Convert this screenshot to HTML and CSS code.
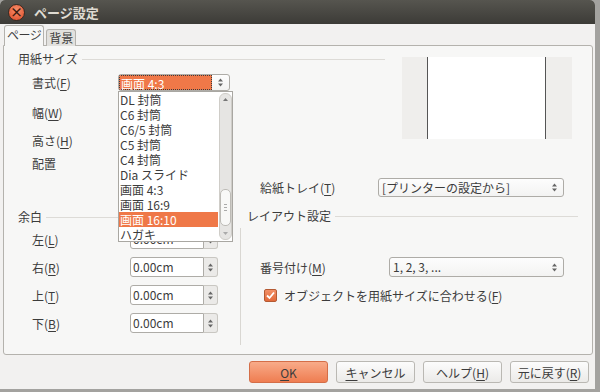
FILE: index.html
```html
<!DOCTYPE html>
<html lang="ja">
<head>
  <meta charset="UTF-8" />
  <title>ページ設定</title>
  <link rel="stylesheet" href="styles.css">
</head>
<body>
  <div class="window">
    <header class="titlebar">
      <span class="close-btn">×</span>
      <h1>ページ設定</h1>
    </header>

    <nav class="tabs">
      <span class="tab active">ページ</span>
      <span class="tab">背景</span>
    </nav>

    <div class="panel">
      <div class="upper">
        <div class="paper">
          <div class="group-head">用紙サイズ</div>
          <div class="row row-format">
            <label>書式(<u>F</u>)</label>
            <div class="combo combo-format">
              <span class="combo-text focused">画面 4:3</span>
              <span class="combo-btn">
                <svg width="7" height="11" viewBox="0 0 7 11"><path d="M1 4.5 L3.5 1.5 L6 4.5Z M1 6.5 L3.5 9.5 L6 6.5Z" fill="#666"/></svg>
              </span>
            </div>
          </div>
          <div class="row row-width"><label>幅(<u>W</u>)</label></div>
          <div class="row row-height"><label>高さ(<u>H</u>)</label></div>
          <div class="row row-align"><label>配置</label></div>
        </div>
        <div class="preview"><div class="page"></div></div>
      </div>

      <div class="tray-row">
        <label>給紙トレイ(<u>T</u>)</label>
        <div class="combo combo-tray">
          <span class="combo-text">[プリンターの設定から]</span>
          <span class="combo-btn">
            <svg width="7" height="11" viewBox="0 0 7 11"><path d="M1 4.5 L3.5 1.5 L6 4.5Z M1 6.5 L3.5 9.5 L6 6.5Z" fill="#666"/></svg>
          </span>
        </div>
      </div>

      <div class="lower">
        <div class="margins">
          <div class="group-head">余白</div>
          <div class="row margin-row">
            <label>左(<u>L</u>)</label>
            <div class="spinbox"><span class="field">0.00cm</span><span class="spin-btn"><svg width="7" height="11" viewBox="0 0 7 11"><path d="M1 4.5 L3.5 1.5 L6 4.5Z M1 6.5 L3.5 9.5 L6 6.5Z" fill="#666"/></svg></span></div>
          </div>
          <div class="row margin-row">
            <label>右(<u>R</u>)</label>
            <div class="spinbox"><span class="field">0.00cm</span><span class="spin-btn"><svg width="7" height="11" viewBox="0 0 7 11"><path d="M1 4.5 L3.5 1.5 L6 4.5Z M1 6.5 L3.5 9.5 L6 6.5Z" fill="#666"/></svg></span></div>
          </div>
          <div class="row margin-row">
            <label>上(<u>T</u>)</label>
            <div class="spinbox"><span class="field">0.00cm</span><span class="spin-btn"><svg width="7" height="11" viewBox="0 0 7 11"><path d="M1 4.5 L3.5 1.5 L6 4.5Z M1 6.5 L3.5 9.5 L6 6.5Z" fill="#666"/></svg></span></div>
          </div>
          <div class="row margin-row">
            <label>下(<u>B</u>)</label>
            <div class="spinbox"><span class="field">0.00cm</span><span class="spin-btn"><svg width="7" height="11" viewBox="0 0 7 11"><path d="M1 4.5 L3.5 1.5 L6 4.5Z M1 6.5 L3.5 9.5 L6 6.5Z" fill="#666"/></svg></span></div>
          </div>
        </div>

        <div class="vsep"></div>

        <div class="layout">
          <div class="group-head">レイアウト設定</div>
          <div class="row row-numbering">
            <label>番号付け(<u>M</u>)</label>
            <div class="combo combo-numbering">
              <span class="combo-text">1, 2, 3, ...</span>
              <span class="combo-btn">
                <svg width="7" height="11" viewBox="0 0 7 11"><path d="M1 4.5 L3.5 1.5 L6 4.5Z M1 6.5 L3.5 9.5 L6 6.5Z" fill="#666"/></svg>
              </span>
            </div>
          </div>
          <div class="check-row">
            <span class="checkbox">
              <svg width="13" height="13" viewBox="0 0 13 13"><path d="M3 6.5 L5.5 9 L10 3.5" fill="none" stroke="#fff" stroke-width="1.8"/></svg>
            </span>
            <span>オブジェクトを用紙サイズに合わせる(<u>F</u>)</span>
          </div>
        </div>
      </div>
    </div>

    <div class="buttons">
      <button class="btn btn-ok"><u>O</u>K</button>
      <button class="btn"><u>キ</u>ャンセル</button>
      <button class="btn">ヘルプ(<u>H</u>)</button>
      <button class="btn">元に戻す(<u>R</u>)</button>
    </div>

    <div class="dropdown">
      <ul class="dropdown-list">
        <li>DL 封筒</li>
        <li>C6 封筒</li>
        <li>C6/5 封筒</li>
        <li>C5 封筒</li>
        <li>C4 封筒</li>
        <li>Dia スライド</li>
        <li>画面 4:3</li>
        <li>画面 16:9</li>
        <li class="selected">画面 16:10</li>
        <li>ハガキ</li>
      </ul>
      <div class="scrollbar">
        <svg class="sb-up" width="7" height="5" viewBox="0 0 7 5"><path d="M1 4 L3.5 1 L6 4Z" fill="#777"/></svg>
        <div class="sb-thumb"><span></span><span></span><span></span></div>
        <svg class="sb-down" width="7" height="5" viewBox="0 0 7 5"><path d="M1 1 L3.5 4 L6 1Z" fill="#aaa"/></svg>
      </div>
    </div>
  </div>
</body>
</html>
```

FILE: styles.css
```css
* {
  box-sizing: border-box;
}

body {
  margin: 0;
  background: #a3a29f;
  font-family: "Noto Sans CJK JP", "DejaVu Sans", sans-serif;
  font-size: 12px;
  color: #3c3c3c;
}

u {
  text-underline-offset: 2px;
}

.window {
  position: relative;
  width: 595px;
  height: 389px;
  background: #f2f1f0;
  border-radius: 5px 5px 0 0;
  overflow: hidden;
  display: flex;
  flex-direction: column;
}

/* title bar */
.titlebar {
  height: 24px;
  flex: none;
  background: linear-gradient(#56554f, #3c3b37);
  display: flex;
  align-items: center;
  padding-left: 8px;
  gap: 9px;
}

.close-btn {
  width: 17px;
  height: 17px;
  border-radius: 50%;
  background: radial-gradient(circle at 50% 35%, #f7906c, #dc4a27);
  border: 1px solid #3a2a22;
  color: #3b1b10;
  font-size: 13px;
  line-height: 14px;
  text-align: center;
  font-weight: bold;
}

.titlebar h1 {
  margin: 0;
  font-size: 13px;
  font-weight: bold;
  color: #dfdbd2;
}

/* tabs */
.tabs {
  height: 22px;
  flex: none;
  display: flex;
  align-items: flex-end;
  padding-left: 4px;
  gap: 2px;
  position: relative;
  z-index: 2;
  margin-bottom: -1px;
}

.tab {
  height: 17px;
  padding: 0 2px;
  border: 1px solid #b4b2ad;
  border-bottom: none;
  border-radius: 3px 3px 0 0;
  background: #e2e1de;
  line-height: 16px;
  font-size: 12px;
  white-space: nowrap;
}

.tab.active {
  height: 21px;
  background: #f7f7f6;
  line-height: 18px;
  letter-spacing: -0.5px;
}

/* main panel */
.panel {
  height: 310px;
  flex: none;
  margin: 0 2px 0 3px;
  border: 1px solid #b4b2ad;
  border-radius: 0 3px 3px 3px;
  background: #f7f7f6;
  padding: 0 14px;
  display: flex;
  flex-direction: column;
}

.group-head {
  display: flex;
  align-items: center;
  gap: 4px;
  height: 14px;
  line-height: 14px;
}

.group-head::after {
  content: "";
  flex: 1;
  height: 1px;
  background: #dddbd7;
}

.row {
  display: flex;
  align-items: center;
  height: 18px;
  padding-left: 14px;
}

.row label {
  flex: none;
}

.upper {
  display: flex;
}

.paper {
  width: 367px;
  display: flex;
  flex-direction: column;
  padding-top: 6px;
}

.row-format {
  margin-top: 7px;
}

.row-format label {
  width: 86px;
}

.row-width {
  margin-top: 12px;
}

.row-height {
  margin-top: 10px;
}

.row-align {
  margin-top: 5px;
}

.preview {
  width: 170px;
  height: 82px;
  margin: 11px 0 0 17px;
  background: #efeeec;
  display: flex;
  justify-content: center;
}

.page {
  width: 119px;
  height: 100%;
  margin-left: -2px;
  background: #fff;
  border-left: 1px solid #555;
  border-right: 1px solid #555;
}

/* combos */
.combo {
  display: flex;
  border: 1px solid #aeaca7;
  border-radius: 3px;
  background: linear-gradient(#fdfdfd, #f3f3f2);
  overflow: hidden;
}

.combo-text {
  flex: 1;
  padding-left: 3px;
  white-space: nowrap;
}

.combo-btn {
  width: 17px;
  display: flex;
  align-items: center;
  justify-content: center;
}

.combo-format {
  width: 112px;
  height: 17px;
  line-height: 15px;
}

.combo-format .combo-text.focused {
  background: #ef7848;
  color: #fff;
  border: 1px dotted #3c3c3c;
  padding-left: 1px;
}

.tray-row {
  display: flex;
  align-items: center;
  height: 19px;
  margin-top: 6px;
  padding-left: 242px;
}

.tray-row label {
  width: 118px;
}

.combo-tray {
  width: 186px;
  height: 19px;
  line-height: 17px;
}

/* lower area */
.lower {
  flex: 1;
  display: flex;
  margin-top: 12px;
}

.margins {
  width: 222px;
  padding-right: 10px;
  display: flex;
  flex-direction: column;
}

.margins .group-head {
  margin-top: 1px;
}

.margin-row {
  height: 20px;
  margin-top: 8px;
}

.margins .group-head + .margin-row {
  margin-top: 5px;
}

.margin-row label {
  width: 98px;
}

.spinbox {
  display: flex;
  height: 20px;
}

.spinbox .field {
  width: 74px;
  border: 1px solid #aeaca7;
  border-radius: 3px 0 0 3px;
  background: #fff;
  line-height: 18px;
  padding-left: 2px;
}

.spin-btn {
  width: 14px;
  border: 1px solid #c9c7c2;
  border-left: none;
  border-radius: 0 3px 3px 0;
  background: #ebeae8;
  display: flex;
  align-items: center;
  justify-content: center;
}

.vsep {
  width: 1px;
  background: #d9d7d2;
  margin: 19px 0 9px;
}

.layout {
  flex: 1;
  padding-left: 6px;
  display: flex;
  flex-direction: column;
}

.row-numbering {
  margin-top: 34px;
  height: 20px;
  padding-left: 13px;
}

.row-numbering label {
  width: 129px;
}

.combo-numbering {
  width: 175px;
  height: 20px;
  line-height: 18px;
}

.check-row {
  display: flex;
  align-items: center;
  gap: 7px;
  margin-top: 11px;
  padding-left: 17px;
  height: 14px;
}

.checkbox {
  width: 13px;
  height: 13px;
  border: 1px solid #b45a33;
  border-radius: 2px;
  background: linear-gradient(#f29067, #e26a3a);
  display: flex;
}

.checkbox svg {
  margin: -1px;
}

/* dialog buttons */
.buttons {
  display: flex;
  justify-content: flex-end;
  gap: 8px;
  padding: 6px 6px 0 0;
}

.btn {
  width: 79px;
  height: 22px;
  border: 1px solid #bab8b3;
  border-radius: 3px;
  background: linear-gradient(#fcfcfc, #ebeae8);
  font-family: inherit;
  font-size: 12px;
  color: #3c3c3c;
  padding: 0;
}

.btn-ok {
  background: linear-gradient(#f8ab89, #ef7d51);
  border-color: #d46e48;
}

/* open format list */
.dropdown {
  position: absolute;
  left: 118px;
  top: 91px;
  width: 115px;
  height: 151px;
  border: 1px solid #a9a7a2;
  background: #fff;
  display: flex;
  z-index: 5;
}

.dropdown-list {
  list-style: none;
  margin: 0;
  padding: 0;
  flex: 1;
}

.dropdown-list li {
  height: 15px;
  line-height: 15px;
  padding-left: 1px;
  white-space: nowrap;
}

.dropdown-list li.selected {
  background: #ef7848;
  color: #fff;
}

.scrollbar {
  width: 13px;
  margin: 1px 0 1px 1px;
  border: 1px solid #cfcdc8;
  border-radius: 6px;
  background: #e6e5e3;
  display: flex;
  flex-direction: column;
  align-items: center;
}

.sb-up {
  margin-top: 3px;
}

.sb-thumb {
  width: 11px;
  height: 37px;
  margin-top: 87px;
  border: 1px solid #bdbbb6;
  border-radius: 5px;
  background: #f8f8f7;
  display: flex;
  flex-direction: column;
  align-items: center;
  justify-content: center;
  gap: 2px;
}

.sb-thumb span {
  width: 3px;
  height: 1px;
  background: #aaa;
}

.sb-down {
  margin-top: auto;
  margin-bottom: 3px;
}
```
